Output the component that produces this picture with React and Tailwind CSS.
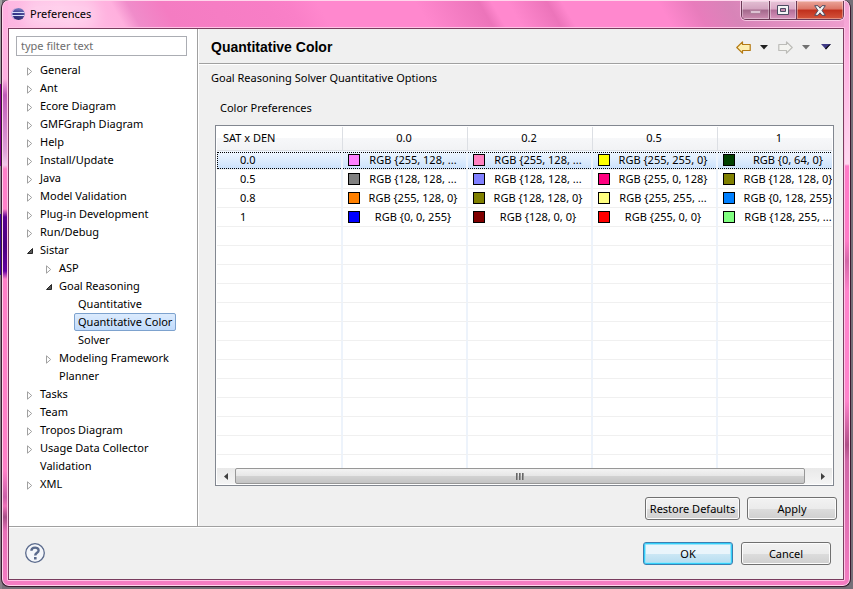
const tree = [
  { label: "General", level: 0, state: "closed" },
  { label: "Ant", level: 0, state: "closed" },
  { label: "Ecore Diagram", level: 0, state: "closed" },
  { label: "GMFGraph Diagram", level: 0, state: "closed" },
  { label: "Help", level: 0, state: "closed" },
  { label: "Install/Update", level: 0, state: "closed" },
  { label: "Java", level: 0, state: "closed" },
  { label: "Model Validation", level: 0, state: "closed" },
  { label: "Plug-in Development", level: 0, state: "closed" },
  { label: "Run/Debug", level: 0, state: "closed" },
  { label: "Sistar", level: 0, state: "open" },
  { label: "ASP", level: 1, state: "closed" },
  { label: "Goal Reasoning", level: 1, state: "open" },
  { label: "Quantitative", level: 2 },
  { label: "Quantitative Color", level: 2, selected: true },
  { label: "Solver", level: 2 },
  { label: "Modeling Framework", level: 1, state: "closed" },
  { label: "Planner", level: 1 },
  { label: "Tasks", level: 0, state: "closed" },
  { label: "Team", level: 0, state: "closed" },
  { label: "Tropos Diagram", level: 0, state: "closed" },
  { label: "Usage Data Collector", level: 0, state: "closed" },
  { label: "Validation", level: 0 },
  { label: "XML", level: 0, state: "closed" },
];

const indents = ["pl-[14px]", "pl-[33px]", "pl-[52px]"];

const columns = ["0.0", "0.2", "0.5", "1"];

const rows = [
  {
    name: "0.0",
    cells: [
      ["bg-[#ff80ff]", "RGB {255, 128, ..."],
      ["bg-[#ff80c0]", "RGB {255, 128, ..."],
      ["bg-[#ffff00]", "RGB {255, 255, 0}"],
      ["bg-[#004000]", "RGB {0, 64, 0}"],
    ],
  },
  {
    name: "0.5",
    cells: [
      ["bg-[#808080]", "RGB {128, 128, ..."],
      ["bg-[#8080ff]", "RGB {128, 128, ..."],
      ["bg-[#ff0080]", "RGB {255, 0, 128}"],
      ["bg-[#808000]", "RGB {128, 128, 0}"],
    ],
  },
  {
    name: "0.8",
    cells: [
      ["bg-[#ff8000]", "RGB {255, 128, 0}"],
      ["bg-[#808000]", "RGB {128, 128, 0}"],
      ["bg-[#ffff80]", "RGB {255, 255, ..."],
      ["bg-[#0080ff]", "RGB {0, 128, 255}"],
    ],
  },
  {
    name: "1",
    cells: [
      ["bg-[#0000ff]", "RGB {0, 0, 255}"],
      ["bg-[#800000]", "RGB {128, 0, 0}"],
      ["bg-[#ff0000]", "RGB {255, 0, 0}"],
      ["bg-[#80ff80]", "RGB {128, 255, ..."],
    ],
  },
];

const emptyRows = Array.from({ length: 13 }, (_, i) => i);

function EclipseLogo() {
  return (
    <svg width="14" height="14" viewBox="0 0 14 14" aria-hidden="true">
      <defs>
        <linearGradient id="ball" x1="0" y1="0" x2="0" y2="1">
          <stop offset="0" stopColor="#7c80c4" />
          <stop offset="0.4" stopColor="#34348c" />
          <stop offset="1" stopColor="#24246c" />
        </linearGradient>
      </defs>
      <path d="M4.6 0.9A6.4 6.4 0 0 0 4.6 13.1" fill="#c9a6dc" />
      <circle cx="7.6" cy="7" r="6.1" fill="url(#ball)" />
      <path d="M1 5.5H13.4M1 8.5H13.4" stroke="#d4def8" strokeWidth="1" />
    </svg>
  );
}

function TreeArrow({ state }) {
  if (state === "open") {
    return (
      <svg width="6" height="6" viewBox="0 0 6 6" aria-hidden="true">
        <path d="M5.5 0.5V5.5H0.5Z" fill="#595959" stroke="#262626" />
      </svg>
    );
  }
  return (
    <svg width="6" height="9" viewBox="0 0 6 9" aria-hidden="true">
      <path d="M0.5 0.8V8.2L4.7 4.5Z" fill="#fff" stroke="#a0a0a0" />
    </svg>
  );
}

function TreeItem({ label, level, state, selected }) {
  return (
    <li
      role="treeitem"
      aria-level={level + 1}
      aria-selected={Boolean(selected)}
      aria-expanded={state ? state === "open" : undefined}
      className={`flex h-[18px] items-center ${indents[level]}`}
    >
      <span className="flex w-[6px] shrink-0 items-center pt-[2px]">
        {state && <TreeArrow state={state} />}
      </span>
      <span
        className={
          selected
            ? "ml-[3px] h-[18px] rounded-[2px] border border-[#7da2ce] bg-linear-to-b from-[#dcebfd] to-[#c1dbfc] px-[3px] leading-[16px]"
            : "ml-[7px] leading-[18px]"
        }
      >
        {label}
      </span>
    </li>
  );
}

function Caret({ color }) {
  return (
    <svg width="8" height="5" viewBox="0 0 8 5" aria-hidden="true">
      <path d="M0 0H8L4 4.5Z" fill={color} />
    </svg>
  );
}

function NavArrow({ stroke, fill, flip }) {
  return (
    <svg width="15" height="13" viewBox="0 0 15 13" aria-hidden="true" className={flip ? "-scale-x-100" : ""}>
      <path
        d="M6.5 0.8V3.5H14.2V9.5H6.5V12.2L0.8 6.5Z"
        fill={fill}
        stroke={stroke}
        strokeWidth="1.2"
        strokeLinejoin="round"
      />
    </svg>
  );
}

function PushButton({ children, width, primary }) {
  return (
    <button
      type="button"
      className={`h-[23px] rounded-[3px] border text-center leading-[19px] ${width} ${
        primary
          ? "border-[#3c7fb1] bg-[linear-gradient(#eaf5fb_50%,#cde8f5_50%,#b4dcf0)] shadow-[inset_0_0_0_1px_#34d0fa,inset_0_0_0_2px_#9ce4fa]"
          : "border-[#707070] bg-[linear-gradient(#f2f2f2,#ebebeb_50%,#dddddd_50%,#cfcfcf)] shadow-[inset_0_0_0_1px_#fcfcfc]"
      }`}
    >
      {children}
    </button>
  );
}

function TitleBar() {
  return (
    <header className="flex h-[26px] shrink-0 items-start justify-between pr-px pl-[4px]">
      <div className="flex h-[26px] items-center gap-[5px]">
        <EclipseLogo />
        <h1 className="rounded-full bg-white/25 shadow-[0_0_12px_8px_rgba(255,255,255,0.25)]">Preferences</h1>
      </div>
      <div className="flex h-[19px] overflow-hidden rounded-b-[5px] border border-t-0 border-[#6b3a56] shadow-[0_0_0_1px_rgba(255,225,242,0.7)]">
        <button
          type="button"
          aria-label="Minimize"
          className="flex w-[28px] items-end justify-center border-r border-[#6b3a56] bg-[linear-gradient(#e3bfd3,#d3a3bf_45%,#a3688b_50%,#cd8db1)] pb-[5px] shadow-[inset_0_0_0_1px_rgba(255,255,255,0.35)]"
        >
          <span className="h-[4px] w-[11px] border border-[#b0809c] bg-[#dcc3d2]" />
        </button>
        <button
          type="button"
          aria-label="Maximize"
          className="flex w-[27px] items-center justify-center border-r border-[#6b3a56] bg-[linear-gradient(#e8c4d8,#dba9c6_45%,#b26d97_50%,#d995bc)] shadow-[inset_0_0_0_1px_rgba(255,255,255,0.35)]"
        >
          <svg width="12" height="10" viewBox="0 0 12 10" aria-hidden="true">
            <path d="M0.5 0.5H11.5V9.5H0.5Z" fill="#f4f4f4" stroke="#4c4c62" />
            <path d="M3.5 3.5H8.5V6.5H3.5Z" fill="#c98bb0" stroke="#4c4c62" />
          </svg>
        </button>
        <button
          type="button"
          aria-label="Close"
          className="flex w-[46px] items-center justify-center bg-[linear-gradient(#eba59b,#dc7465_45%,#c02f1c_50%,#d4543c)] shadow-[inset_0_0_0_1px_rgba(255,255,255,0.35)]"
        >
          <svg width="12" height="11" viewBox="0 0 12 11" aria-hidden="true">
            <path
              d="M0.7 0.7H4L6 3.2L8 0.7H11.3L8 5.5L11.3 10.3H8L6 7.8L4 10.3H0.7L4 5.5Z"
              fill="#f6f6f6"
              stroke="#4c4c62"
            />
          </svg>
        </button>
      </div>
    </header>
  );
}

function Sidebar() {
  return (
    <nav className="w-[189px] shrink-0 border-r border-[#a0a0a0] bg-white pt-[7px]">
      <input
        type="text"
        aria-label="Filter preferences"
        placeholder="type filter text"
        className="ml-[7px] block h-[20px] w-[171px] border border-[#abadb3] px-[4px] pb-[2px] placeholder:text-[#6d6d6d]"
      />
      <ul role="tree" className="mt-[5px] pl-[4px]">
        {tree.map((item) => (
          <TreeItem key={item.label} {...item} />
        ))}
      </ul>
    </nav>
  );
}

function Swatch({ color }) {
  return <span className={`h-[12px] w-[12px] shrink-0 border border-black ${color}`} />;
}

const focus = "border-y border-dotted border-black";

function ColorTable() {
  return (
    <div className="flex min-h-0 flex-1 flex-col border border-[#828790] bg-white p-px">
      <div className="min-h-0 flex-1 overflow-hidden">
        <table className="w-[626px] table-fixed border-separate border-spacing-0">
          <colgroup>
            <col className="w-[126px]" />
            <col />
            <col />
            <col />
            <col />
          </colgroup>
          <thead>
            <tr className="h-[24px] bg-[linear-gradient(#ffffff_45%,#f7f8fa_45%,#f1f2f4)]">
              <th scope="col" className="border-r border-b border-[#dcdfe4] p-0 pl-[6px] text-left font-normal">
                SAT x DEN
              </th>
              {columns.map((c) => (
                <th key={c} scope="col" className="border-r border-b border-[#dcdfe4] p-0 pr-[2px] font-normal">
                  {c}
                </th>
              ))}
            </tr>
          </thead>
          <tbody>
            {rows.map((row, i) => (
              <tr
                key={row.name}
                aria-selected={i === 0}
                className={i === 0 ? "bg-linear-to-b from-[#f0f7ff] to-[#c9e0fb]" : ""}
              >
                <th
                  scope="row"
                  className="h-[19px] border-r-2 border-b border-r-[#edf3fb] border-b-[#f0f0f0] p-0 text-left font-normal"
                >
                  <div className={`flex h-[17px] items-center ${i === 0 ? `${focus} border-l pl-[22px]` : "pl-[23px]"}`}>
                    {row.name}
                  </div>
                </th>
                {row.cells.map(([color, text], j) => (
                  <td key={j} className="border-r-2 border-b border-r-[#edf3fb] border-b-[#f0f0f0] p-0">
                    <div className={`flex h-[17px] items-center pl-[5px] ${i === 0 ? focus : ""}`}>
                      <Swatch color={color} />
                      <span className="flex-1 text-center whitespace-nowrap">{text}</span>
                    </div>
                  </td>
                ))}
              </tr>
            ))}
            {emptyRows.map((n) => (
              <tr key={n} aria-hidden="true">
                {[0, 1, 2, 3, 4].map((c) => (
                  <td key={c} className="h-[19px] border-r-2 border-b border-r-[#edf3fb] border-b-[#f0f0f0] p-0" />
                ))}
              </tr>
            ))}
          </tbody>
        </table>
      </div>
      <div className="flex h-[16px] shrink-0 bg-linear-to-b from-[#e9e9e9] to-[#f4f4f4]">
        <button type="button" aria-label="Scroll left" className="flex w-[18px] items-center justify-center">
          <svg width="4" height="7" viewBox="0 0 4 7" aria-hidden="true">
            <path d="M4 0V7L0 3.5Z" fill="#404040" />
          </svg>
        </button>
        <div className="flex flex-1">
          <div className="mr-[9px] flex flex-1 items-center justify-center gap-px rounded-[2px] border border-[#979797] bg-[linear-gradient(#f3f3f3,#e6e6e6_50%,#d2d2d2_50%,#c4c4c4)]">
            <span className="h-[7px] w-[2px] bg-linear-to-r from-[#505050] to-[#b0b0b0]" />
            <span className="h-[7px] w-[2px] bg-linear-to-r from-[#505050] to-[#b0b0b0]" />
            <span className="h-[7px] w-[2px] bg-linear-to-r from-[#505050] to-[#b0b0b0]" />
          </div>
        </div>
        <button type="button" aria-label="Scroll right" className="flex w-[18px] items-center justify-center">
          <svg width="4" height="7" viewBox="0 0 4 7" aria-hidden="true">
            <path d="M0 0V7L4 3.5Z" fill="#404040" />
          </svg>
        </button>
      </div>
    </div>
  );
}

function PreferencePage() {
  return (
    <section className="flex min-w-0 flex-1 flex-col border-l border-white">
      <div className="flex h-[35px] shrink-0 items-center justify-between border-b border-[#a0a0a0] px-[12px] pt-[2px]">
        <h2 className="font-['Liberation_Sans',sans-serif] text-[14px] leading-[16px] font-bold">Quantitative Color</h2>
        <div className="flex items-center">
          <button type="button" aria-label="Back" className="mr-[9px]">
            <NavArrow stroke="#b47a14" fill="#fdeeb0" />
          </button>
          <button type="button" aria-label="Back history" className="mr-[10px]">
            <Caret color="#202020" />
          </button>
          <button type="button" aria-label="Forward" className="mr-[9px]">
            <NavArrow stroke="#bcbcb8" fill="#f4f4f0" flip />
          </button>
          <button type="button" aria-label="Forward history" className="mr-[11px]">
            <Caret color="#707070" />
          </button>
          <button type="button" aria-label="Menu">
            <svg width="10" height="6" viewBox="0 0 10 6" aria-hidden="true">
              <path d="M0 0H10L5 5.5Z" fill="#3f3a86" />
              <path d="M10 0L5 5.5L4 4.4L8 0.8Z" fill="#101010" />
            </svg>
          </button>
        </div>
      </div>
      <div className="flex min-h-0 flex-1 flex-col border-t border-white pt-[4px] pr-[6px] pb-[6px] pl-[12px]">
        <p className="leading-[18px]">Goal Reasoning Solver Quantitative Options</p>
        <h3 className="mt-[12px] pl-[9px] leading-[18px]">Color Preferences</h3>
        <div className="mt-[8px] mr-[3px] ml-[4px] flex min-h-0 flex-1 flex-col">
          <ColorTable />
        </div>
        <div className="mt-[11px] flex justify-end gap-[7px]">
          <PushButton width="w-[95px]">Restore Defaults</PushButton>
          <PushButton width="w-[90px]">Apply</PushButton>
        </div>
      </div>
    </section>
  );
}

export default function App() {
  return (
    <div className="h-screen bg-[#747078] bg-[linear-gradient(#a0a0a0_0,#a0a0a0_84px,#8a0090_84px,#8a0090_166px,#8f8a90_166px,#8f8a90_214px,#3c00a0_214px,#3c00a0_275px,#8a8088_275px,#8a8088)] bg-[length:2px_100%] bg-no-repeat pr-[2px] pb-[2px] pl-px font-['Noto_Sans',sans-serif] text-[11px] text-black">
      <div className="flex h-full flex-col overflow-hidden rounded-[8px] border border-t-0 border-[#3a1c30]">
        <div className="flex min-h-0 flex-1 flex-col rounded-[7px] border border-[#ffd6ec] bg-[#f47cc2] bg-[linear-gradient(#ffb0e0_0,#ffb0e0_78px,#c05cb8_94px,#dfa0d8_150px,#f0c8e8_164px,#ff80c8_168px,#ff80c8_208px,#5a0090_216px,#4c0080_245px,#6400a0_270px,#ff80c8_278px,#ff80c8_470px,#cc60a8_496px,#f070b8_505px,#a85088_516px,#e870b8_530px,#f47cc2),linear-gradient(#f0a0d0_0,#ffb0e0_60px,#ffd8f0_163px,#ff7cc8_165px,#ff7cc8_240px,#d468a8_260px,#ff84cc_290px,#ff84cc_400px,#b05088_444px,#d068a8_460px,#f47cc2),linear-gradient(60deg,#fcb4e0_0,#ffc0e6_60px,#ffb0de_106px,#f08cca_120px,#f47cc2_150px,#f87ec6_240px,#fa80c8_260px,#ff88ce_285px,#ff88ce_370px,#ec74ba_425px,#ff88ce_436px,#ff88ce_450px,#ec74ba_484px,#ff88ce_497px,#ff88ce_580px,#e87cbc_610px,#d884b8_640px,#f0a0d0_740px)] bg-[length:5px_100%,5px_100%,100%_27px] bg-[position:left_top,right_top,left_top] bg-no-repeat px-[4px] pb-[4px]">
          <TitleBar />
          <main className="flex min-h-0 flex-1 flex-col rounded-[1px] border border-[#ffc4e6]">
            <div className="flex min-h-0 flex-1 flex-col border border-[#783c5e] bg-[#f0f0f0]">
              <div className="flex min-h-0 flex-1">
                <Sidebar />
                <PreferencePage />
              </div>
              <footer className="flex h-[53px] shrink-0 items-center border-t border-[#a0a0a0] pr-[12px] pl-[16px] shadow-[inset_0_1px_0_#ffffff]">
                <button type="button" aria-label="Help" className="mr-auto">
                  <svg width="20" height="20" viewBox="0 0 20 20" aria-hidden="true">
                    <circle cx="10" cy="10" r="9.3" fill="#f4f6fa" stroke="#5a6a8c" strokeWidth="1.3" />
                    <path
                      d="M6.4 7.8C6.4 3.6 13.6 3.6 13.6 7.4C13.6 9.8 10.2 9.8 10.2 12.6"
                      fill="none"
                      stroke="#5a6a8c"
                      strokeWidth="2.4"
                    />
                    <path d="M9 14H11.6V16.4H9Z" fill="#5a6a8c" />
                  </svg>
                </button>
                <div className="flex gap-[8px]">
                  <PushButton width="w-[90px]" primary>
                    OK
                  </PushButton>
                  <PushButton width="w-[90px]">Cancel</PushButton>
                </div>
              </footer>
            </div>
          </main>
        </div>
      </div>
    </div>
  );
}
